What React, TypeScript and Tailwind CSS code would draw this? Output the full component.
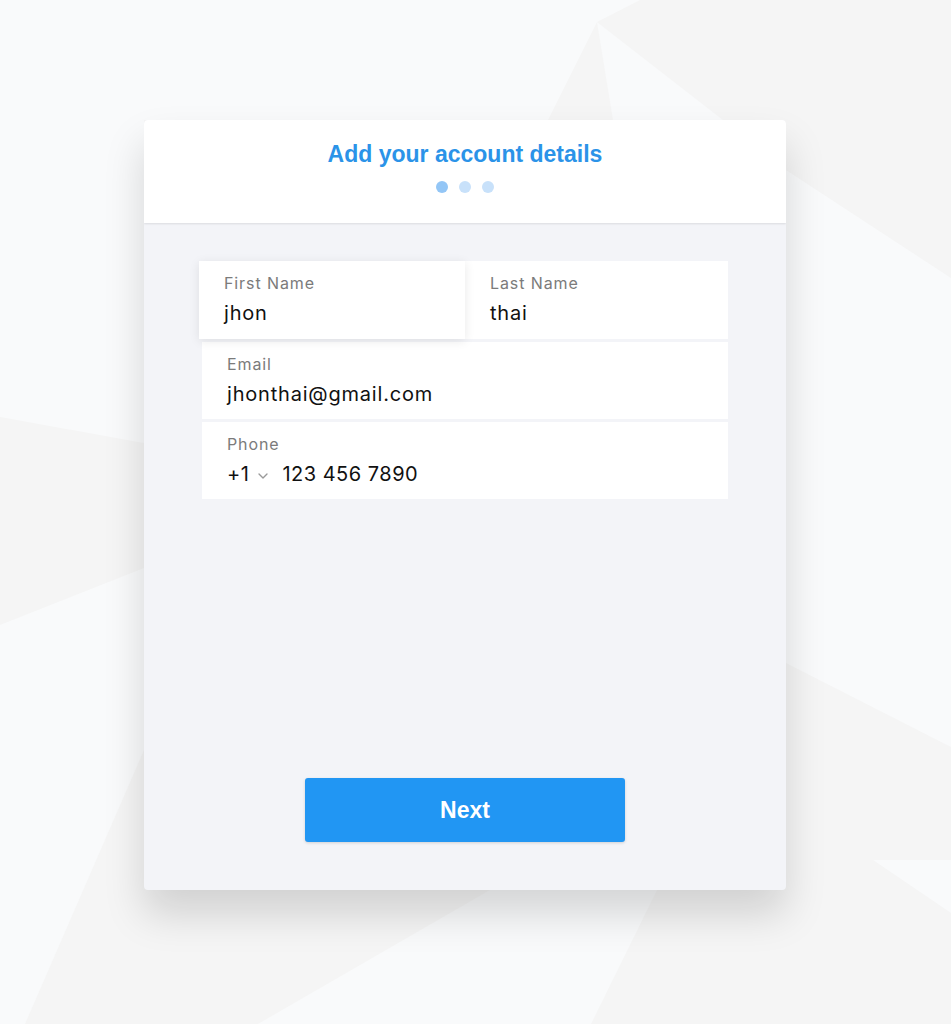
import { ChevronDown } from "lucide-react";

const fields = [
  { label: "Email", value: "jhonthai@gmail.com" },
];

function Backdrop() {
  // faint low-poly backdrop
  return (
    <svg
      className="absolute inset-0 h-full w-full"
      viewBox="0 0 951 1024"
      preserveAspectRatio="none"
    >
      <rect width="951" height="1024" fill="#f5f5f5" />
      <polygon points="0,0 640,0 597,22 548,120 144,120 144,443 0,417" fill="#f9fafb" />
      <polygon points="597,22 613,120 723,120" fill="#f9fafb" />
      <polygon points="786,170 951,278 951,747 786,663" fill="#f9fafb" />
      <polygon points="0,625 144,568 144,750 25,1024 0,1024" fill="#f9fafb" />
      <polygon points="490,890 657,890 591,1024 258,1024" fill="#f9fafb" />
      <polygon points="873,860 951,860 951,913" fill="#f9fafb" />
    </svg>
  );
}

function Field({ label, value }: { label: string; value: string }) {
  return (
    <div className="flex h-[77px] flex-col bg-white px-[25px] pt-[13px]">
      <span className="text-[16px] leading-[18px] tracking-[0.9px] text-[#7b7b7b]">{label}</span>
      <span className="mt-[9px] text-[20px] leading-[24px] tracking-[0.8px] text-[#111]">{value}</span>
    </div>
  );
}

export default function App() {
  return (
    <div
      className="relative min-h-screen overflow-hidden"
      style={{ fontFamily: "Inter, 'Noto Sans', sans-serif" }}
    >
      <Backdrop />
      <div className="relative pl-[144px] pt-[120px]">
        <div className="flex h-[770px] w-[642px] flex-col overflow-hidden rounded-[4px] bg-[#f3f4f8] shadow-[0_24px_40px_rgba(0,0,0,0.15)]">
          {/* Header */}
          <div className="relative z-10 flex h-[103px] flex-col items-center bg-white pt-[20px] shadow-[0_1px_2px_rgba(0,0,0,0.1)]">
            <h1
              className="text-[23px] font-bold leading-[28px] text-[#2b93e8]"
              style={{ fontFamily: "'Liberation Sans', Arial, sans-serif" }}
            >
              Add your account details
            </h1>
            <div className="mt-[13px] flex gap-[11px]">
              <span className="h-[12px] w-[12px] rounded-full bg-[#93c6f6]" />
              <span className="h-[12px] w-[12px] rounded-full bg-[#c8e1fa]" />
              <span className="h-[12px] w-[12px] rounded-full bg-[#c8e1fa]" />
            </div>
          </div>

          {/* Body */}
          <div className="flex flex-1 flex-col justify-between px-[58px] pb-[48px] pt-[38px]">
            <div className="flex flex-col gap-[3px]">
              <div className="-ml-[3px] flex">
                <div className="relative z-10 w-[266px] shadow-[0_2px_10px_rgba(0,0,0,0.09)]">
                  <div className="flex h-[78px] flex-col bg-white px-[25px] pt-[13px]">
                    <span className="text-[16px] leading-[18px] tracking-[0.9px] text-[#7b7b7b]">First Name</span>
                    <span className="mt-[9px] text-[20px] leading-[24px] tracking-[0.8px] text-[#111]">jhon</span>
                  </div>
                </div>
                <div className="flex-1">
                  <div className="flex h-[78px] flex-col bg-white px-[25px] pt-[13px]">
                    <span className="text-[16px] leading-[18px] tracking-[0.9px] text-[#7b7b7b]">Last Name</span>
                    <span className="mt-[9px] text-[20px] leading-[24px] tracking-[0.8px] text-[#111]">thai</span>
                  </div>
                </div>
              </div>
              {fields.map((f) => (
                <Field key={f.label} label={f.label} value={f.value} />
              ))}
              <div className="flex h-[77px] flex-col bg-white px-[25px] pt-[13px]">
                <span className="text-[16px] leading-[18px] tracking-[0.9px] text-[#7b7b7b]">Phone</span>
                <div className="mt-[9px] flex items-center text-[20px] leading-[24px] tracking-[0.5px] text-[#111]">
                  <span>+1</span>
                  <ChevronDown className="ml-[6px] mr-[11px] mt-[3px] h-[16px] w-[16px] text-[#9a9a9a]" strokeWidth={2} />
                  <span>123 456 7890</span>
                </div>
              </div>
            </div>

            <button
              className="mx-auto h-[64px] w-[320px] rounded-[3px] bg-[#2196f3] text-[23px] font-bold text-white shadow-[0_1px_3px_rgba(0,0,0,0.15)]"
              style={{ fontFamily: "'Liberation Sans', Arial, sans-serif" }}
            >
              Next
            </button>
          </div>
        </div>
      </div>
    </div>
  );
}
